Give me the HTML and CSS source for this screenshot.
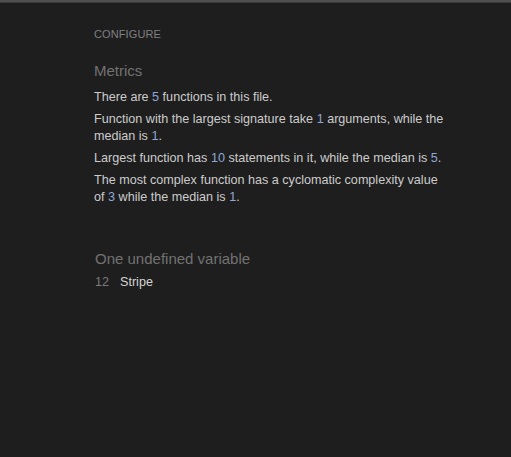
FILE: index.html
```html
<!DOCTYPE html>
<html>
<head>
<meta charset="utf-8">
<link rel="stylesheet" href="styles.css">
</head>
<body>
<div class="topbar"></div>
<main class="panel">
  <div class="configure">CONFIGURE</div>
  <section class="metrics">
    <h2 class="heading">Metrics</h2>
    <p>There are <span class="num">5</span> functions in this file.</p>
    <p>Function with the largest signature take <span class="num">1</span> arguments, while the median is <span class="num">1</span>.</p>
    <p>Largest function has <span class="num">10</span> statements in it, while the median is <span class="num">5</span>.</p>
    <p>The most complex function has a cyclomatic complexity value of <span class="num">3</span> while the median is <span class="num">1</span>.</p>
  </section>
  <section class="undefined">
    <h2 class="heading">One undefined variable</h2>
    <div class="var-row"><span class="line">12</span><span class="name">Stripe</span></div>
  </section>
</main>
</body>
</html>
```

FILE: styles.css
```css
html, body {
  margin: 0;
  padding: 0;
  background: #1e1e1e;
  height: 100%;
}
body {
  font-family: "Liberation Sans", Arial, sans-serif;
  color: #cccccc;
}
.topbar {
  height: 2px;
  background: #4f4f4f;
  border-bottom: 1px solid #3a3a3a;
}
.panel {
  padding: 25px 0 0 94px;
  width: 356px;
}
.configure {
  font-size: 11px;
  color: #808080;
  letter-spacing: 0.1px;
  line-height: 13px;
}
.heading {
  font-weight: normal;
  font-size: 15px;
  color: #727272;
  margin: 0;
  line-height: 17px;
}
.metrics {
  margin-top: 21px;
}
.metrics .heading {
  margin-bottom: 10px;
}
.metrics p {
  margin: 0 0 5px 0;
  font-size: 12.6px;
  line-height: 17px;
}
.num {
  color: #8fa8d6;
}
.undefined {
  margin-top: 44px;
  padding-left: 1px;
}
.undefined .heading {
  margin-bottom: 8px;
}
.var-row {
  display: flex;
  gap: 11px;
  font-size: 12.6px;
  line-height: 15px;
}
.line {
  color: #7a7a7a;
}
.name {
  color: #d4d4d4;
}
```
